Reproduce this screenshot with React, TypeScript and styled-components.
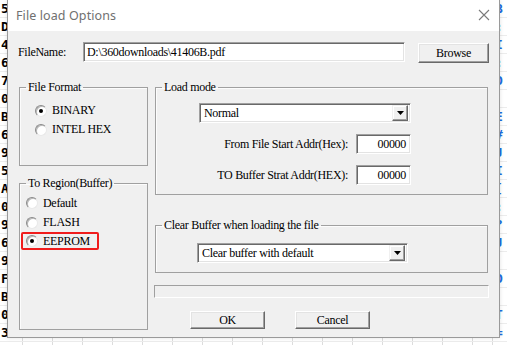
import React from 'react';
import styled, { createGlobalStyle } from 'styled-components';

const GlobalStyle = createGlobalStyle`
  html, body { margin: 0; padding: 0; background: #fff; }
  * { box-sizing: border-box; }
`;

const Page = styled.div`
  position: relative;
  width: 507px;
  height: 345px;
  overflow: hidden;
  background: #fff;
`;

/* ---- the hex sheet behind the dialog ---- */

const Sheet = styled.div`
  display: flex;
  flex-direction: column;
`;

const SheetRow = styled.div`
  display: flex;
  height: 18px;
  align-items: center;
  border-bottom: 1px solid #ececec;
`;

const LabelCell = styled.div`
  width: 23px;
  height: 100%;
  padding-left: 1px;
  display: flex;
  align-items: center;
  font: bold 13px 'DejaVu Sans Mono', monospace;
  color: #000;
  border-right: 1px solid #dcdcdc;
`;

const ByteCell = styled.div<{ $w?: number }>`
  width: ${({ $w }) => $w ?? 30}px;
  height: 100%;
  display: flex;
  align-items: center;
  justify-content: center;
  font: bold 13px 'DejaVu Sans Mono', monospace;
  color: #000;
  border-right: 1px solid #dcdcdc;
`;

const AsciiCell = styled.div`
  flex: 1;
  padding-left: 2px;
  font: bold 13px 'DejaVu Sans Mono', monospace;
  color: #1f6fe0;
`;

/* ---- dialog ---- */

const Dialog = styled.div`
  position: absolute;
  left: 7px;
  top: -1px;
  width: 493px;
  height: 339px;
  display: flex;
  flex-direction: column;
  border: 1px solid #9a9a9a;
  box-shadow: 0 0 4px rgba(0, 0, 0, 0.12);
  background: #f0f0f0;
  font: 12px 'Liberation Serif', 'Times New Roman', serif;
  letter-spacing: -0.3px;
  color: #000;
`;

const TitleBar = styled.div`
  height: 31px;
  flex: none;
  background: #fff;
  display: flex;
  align-items: center;
  justify-content: space-between;
  padding: 0 9px 1px 8px;
`;

const Title = styled.span`
  font: 12.5px 'Noto Sans', 'Noto Sans CJK SC', sans-serif;
  letter-spacing: 0.1px;
  color: #707070;
`;

const Body = styled.div`
  flex: 1;
  display: flex;
  flex-direction: column;
  padding: 11px 9px 0 10px;
`;

const FileRow = styled.div`
  display: flex;
  align-items: flex-start;
  height: 21px;
`;

const FieldLabel = styled.span`
  width: 65px;
  line-height: 20px;
`;

const Sunken = styled.div<{ $w: number; $h?: number; $right?: boolean }>`
  width: ${({ $w }) => $w}px;
  height: ${({ $h }) => $h ?? 20}px;
  background: #fff;
  border: 1px solid;
  border-color: #a0a0a0 #fff #fff #a0a0a0;
  box-shadow: inset 1px 1px 0 #696969, inset -1px -1px 0 #e3e3e3;
  display: flex;
  align-items: center;
  justify-content: ${({ $right }) => ($right ? 'flex-end' : 'flex-start')};
  padding: ${({ $right }) => ($right ? '0 4px 0 0' : '0 0 0 3px')};
  white-space: nowrap;
  overflow: hidden;
`;

const Button = styled.button<{ $w: number; $h?: number; $ml?: number; $mt?: number }>`
  width: ${({ $w }) => $w}px;
  height: ${({ $h }) => $h ?? 20}px;
  margin-left: ${({ $ml }) => $ml ?? 0}px;
  margin-top: ${({ $mt }) => $mt ?? 0}px;
  padding: 0;
  background: #f0f0f0;
  font: inherit;
  letter-spacing: inherit;
  color: #000;
  border: 1px solid;
  border-color: #fff #696969 #696969 #fff;
  box-shadow: inset -1px -1px 0 #a0a0a0, inset 1px 1px 0 #e3e3e3;
`;

const Main = styled.div`
  display: flex;
  margin-top: 17px;
`;

const LeftCol = styled.div`
  width: 129px;
  margin-left: 1px;
  display: flex;
  flex-direction: column;
  gap: 10px;
`;

const RightCol = styled.div`
  width: 335px;
  margin-left: 6px;
  display: flex;
  flex-direction: column;
`;

const Group = styled.fieldset<{ $h: number; $w?: number; $ml?: number; $mt?: number }>`
  margin: ${({ $mt }) => $mt ?? 0}px 0 0 ${({ $ml }) => $ml ?? 0}px;
  padding: 0;
  min-width: 0;
  width: ${({ $w }) => ($w ? `${$w}px` : 'auto')};
  height: ${({ $h }) => $h}px;
  border: 1px solid #a0a0a0;
  box-shadow: inset 1px 1px 0 #fcfcfc;
`;

const Legend = styled.legend`
  margin-left: 6px;
  padding: 0 2px;
  line-height: 14px;
`;

const RadioList = styled.div<{ $pt: number; $pl: number }>`
  display: flex;
  flex-direction: column;
  padding: ${({ $pt }) => $pt}px 0 0 ${({ $pl }) => $pl}px;
`;

const RadioRow = styled.label<{ $h: number; $mark?: boolean }>`
  display: flex;
  align-items: center;
  gap: 5px;
  height: ${({ $h }) => $h}px;
  width: ${({ $mark }) => ($mark ? '78px' : 'auto')};
  padding-left: 3px;
  border: 2px solid ${({ $mark }) => ($mark ? '#f01c1c' : 'transparent')};
  border-radius: 2px;
`;

const RadioDot = styled.span<{ $on?: boolean }>`
  width: 12px;
  height: 12px;
  flex: none;
  border-radius: 50%;
  background: #fff;
  border: 1px solid;
  border-color: #8a8a8a #e8e8e8 #e8e8e8 #8a8a8a;
  box-shadow: inset 1px 1px 0 #b8b8b8;
  display: flex;
  align-items: center;
  justify-content: center;

  &::after {
    content: '';
    width: 4px;
    height: 4px;
    border-radius: 50%;
    background: ${({ $on }) => ($on ? '#000' : 'transparent')};
  }
`;

const Select = styled(Sunken)`
  justify-content: space-between;
  padding: 0 2px 0 4px;
`;

const DropButton = styled.span`
  width: 16px;
  height: 16px;
  background: #f0f0f0;
  border: 1px solid;
  border-color: #f0f0f0 #696969 #696969 #f0f0f0;
  box-shadow: inset -1px -1px 0 #a0a0a0, inset 1px 1px 0 #fff;
  display: flex;
  align-items: center;
  justify-content: center;
`;

const SelectBlock = styled.div<{ $pt: number; $pl: number }>`
  padding: ${({ $pt }) => $pt}px 0 0 ${({ $pl }) => $pl}px;
`;

const AddrRow = styled.div<{ $mt: number }>`
  display: flex;
  align-items: center;
  justify-content: flex-end;
  gap: 8px;
  margin-top: ${({ $mt }) => $mt}px;
  padding-right: 76px;
`;

const Progress = styled.div`
  height: 13px;
  margin-top: 12px;
  border: 1px solid;
  border-color: #a0a0a0 #fff #fff #a0a0a0;
`;

const ButtonRow = styled.div`
  display: flex;
  gap: 30px;
  padding-left: 36px;
  margin-top: 13px;
`;

const Arrow = () => (
  <svg width="7" height="4" viewBox="0 0 7 4">
    <path d="M0 0h7L3.5 4z" fill="#000" />
  </svg>
);

const CloseIcon = () => (
  <svg width="12" height="12" viewBox="0 0 12 12">
    <path d="M1 1l10 10M11 1L1 11" stroke="#7a7a7a" strokeWidth="1.1" fill="none" />
  </svg>
);

const leftChars = '5D4670B695A0969FB03 '.split('');
const blueChars = 'B:I:D E#JI[:?J D T= E:[(NSU;'.split('');

// only the row whose glyph feet peek out under the dialog carries bytes
const BYTE_ROW = 18;

function byteAt(r: number, c: number) {
  if (r !== BYTE_ROW) return '';
  const v = (r * 37 + c * 91 + 17) % 256;
  return v.toString(16).toUpperCase().padStart(2, '0');
}

const HexSheet = () => (
  <Sheet>
    {leftChars.map((ch, r) => (
      <SheetRow key={r}>
        <LabelCell>{ch.trim()}</LabelCell>
        {Array.from({ length: 15 }).map((_, c) => (
          <ByteCell key={c}>{byteAt(r, c)}</ByteCell>
        ))}
        <ByteCell $w={20} />
        <AsciiCell>{r < 19 ? blueChars[r] : ''}</AsciiCell>
      </SheetRow>
    ))}
  </Sheet>
);

const Radio = ({ label, on, h, mark }: { label: string; on?: boolean; h: number; mark?: boolean }) => (
  <RadioRow $h={h} $mark={mark}>
    <RadioDot $on={on} />
    {label}
  </RadioRow>
);

export default function App() {
  return (
    <Page>
      <GlobalStyle />
      <HexSheet />
      <Dialog>
        <TitleBar>
          <Title>File load Options</Title>
          <CloseIcon />
        </TitleBar>
        <Body>
          <FileRow>
            <FieldLabel>FileName:</FieldLabel>
            <Sunken $w={322}>D:\360downloads\41406B.pdf</Sunken>
            <Button $w={71} $ml={13} $mt={1}>Browse</Button>
          </FileRow>

          <Main>
            <LeftCol>
              <Group $h={86}>
                <Legend>File Format</Legend>
                <RadioList $pt={7} $pl={10}>
                  <Radio label="BINARY" on h={19} />
                  <Radio label="INTEL HEX" h={19} />
                </RadioList>
              </Group>
              <Group $h={154}>
                <Legend>To Region(Buffer)</Legend>
                <RadioList $pt={3} $pl={1}>
                  <Radio label="Default" h={20} />
                  <Radio label="FLASH" h={19} />
                  <Radio label="EEPROM" on h={18} mark />
                </RadioList>
              </Group>
            </LeftCol>

            <RightCol>
              <Group $h={115} $w={333} $ml={1}>
                <Legend>Load mode</Legend>
                <SelectBlock $pt={9} $pl={43}>
                  <Select $w={212}>
                    Normal
                    <DropButton><Arrow /></DropButton>
                  </Select>
                </SelectBlock>
                <AddrRow $mt={11}>
                  From File Start Addr(Hex):
                  <Sunken $w={55} $right>00000</Sunken>
                </AddrRow>
                <AddrRow $mt={11}>
                  TO Buffer Strat Addr(HEX):
                  <Sunken $w={55} $right>00000</Sunken>
                </AddrRow>
              </Group>

              <Group $h={55} $w={333} $ml={1} $mt={23}>
                <Legend>Clear Buffer when loading the file</Legend>
                <SelectBlock $pt={11} $pl={41}>
                  <Select $w={211}>
                    Clear buffer with default
                    <DropButton><Arrow /></DropButton>
                  </Select>
                </SelectBlock>
              </Group>

              <Progress />

              <ButtonRow>
                <Button $w={75} $h={18}>OK</Button>
                <Button $w={75} $h={18}>Cancel</Button>
              </ButtonRow>
            </RightCol>
          </Main>
        </Body>
      </Dialog>
    </Page>
  );
}
